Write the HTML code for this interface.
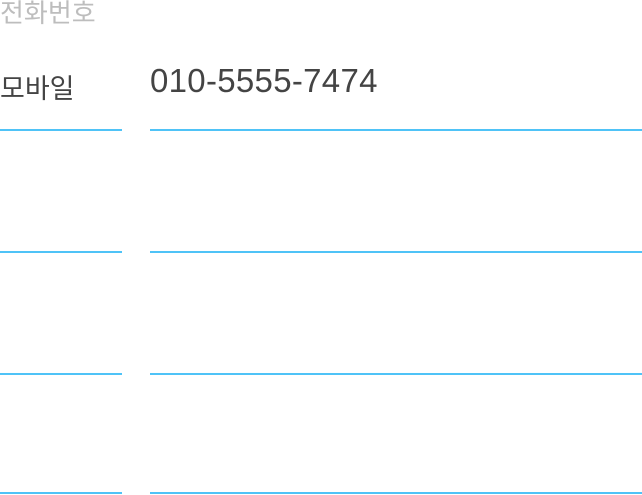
<html><head><style>
body{margin:0;width:642px;height:495px;background:#fff;position:relative;overflow:hidden;font-family:"Liberation Sans","Noto Sans CJK KR",sans-serif}
.t{position:absolute;white-space:nowrap}
.l{position:absolute;height:2px;background:#4fc3f7}
</style></head><body>
<div class="t" style="left:0;top:-7px;font-size:26px;color:#bdbdbd">전화번호</div>
<div class="t" style="left:0;top:67px;font-size:27px;color:#444">모바일</div>
<div class="t" style="left:150px;top:62px;font-size:33px;color:#444;letter-spacing:0.3px">010-5555-7474</div>
<div class="l" style="left:0;width:122px;top:129px"></div><div class="l" style="left:150px;width:492px;top:129px"></div>
<div class="l" style="left:0;width:122px;top:251px"></div><div class="l" style="left:150px;width:492px;top:251px"></div>
<div class="l" style="left:0;width:122px;top:373px"></div><div class="l" style="left:150px;width:492px;top:373px"></div>
<div class="l" style="left:0;width:122px;top:492px"></div><div class="l" style="left:150px;width:492px;top:492px"></div>
</body></html>
